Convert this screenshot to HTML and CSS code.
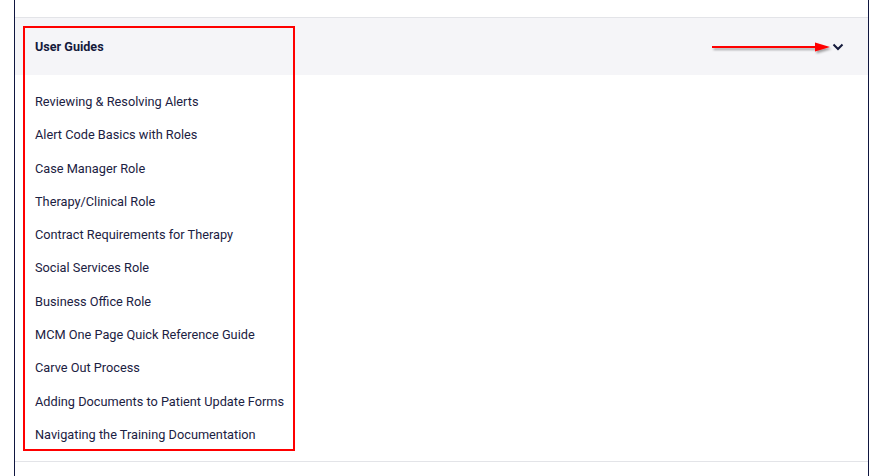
FILE: index.html
```html
<!DOCTYPE html>
<html lang="en">
<head>
    <meta charset="UTF-8">
    <title>User Guides</title>
    <link rel="stylesheet" href="styles.css">
</head>
<body>
    <div class="panel">
        <div class="section">
            <div class="section-header">
                <span class="section-title">User Guides</span>
                <svg class="chevron" width="12" height="8" viewBox="0 0 12 8">
                    <path d="M1.5 1.5 L6 6 L10.5 1.5" fill="none" stroke="#141a3c" stroke-width="2"/>
                </svg>
            </div>
            <ul class="guide-list">
                <li><a href="#">Reviewing &amp; Resolving Alerts</a></li>
                <li><a href="#">Alert Code Basics with Roles</a></li>
                <li><a href="#">Case Manager Role</a></li>
                <li><a href="#">Therapy/Clinical Role</a></li>
                <li><a href="#">Contract Requirements for Therapy</a></li>
                <li><a href="#">Social Services Role</a></li>
                <li><a href="#">Business Office Role</a></li>
                <li><a href="#">MCM One Page Quick Reference Guide</a></li>
                <li><a href="#">Carve Out Process</a></li>
                <li><a href="#">Adding Documents to Patient Update Forms</a></li>
                <li><a href="#">Navigating the Training Documentation</a></li>
            </ul>
        </div>

        <!-- annotation overlays -->
        <div class="highlight-box"></div>
        <svg class="callout-arrow" width="130" height="14" viewBox="0 0 130 14">
            <defs>
                <filter id="shadow" x="-5%" y="-50%" width="110%" height="250%">
                    <feDropShadow dx="1.5" dy="2" stdDeviation="1" flood-color="#000" flood-opacity="0.35"/>
                </filter>
            </defs>
            <g filter="url(#shadow)">
                <line x1="1" y1="6" x2="108" y2="6" stroke="#ff0000" stroke-width="2"/>
                <polygon points="104,1.5 119,6 104,10.5" fill="#ff0000"/>
            </g>
        </svg>
    </div>
</body>
</html>
```

FILE: styles.css
```css
body {
    margin: 0;
    padding: 0;
    background-color: #ffffff;
    font-family: Roboto, "Liberation Sans", Arial, sans-serif;
    color: #1b2142;
}
.panel {
    position: relative;
    margin-left: 14px;
    width: 853px;
    height: 476px;
    border-left: 1px solid #0f1640;
    border-right: 1px solid #0f1640;
    padding-top: 17px;
    box-sizing: content-box;
}
.section {
    border-top: 1px solid #e3e4e8;
    border-bottom: 1px solid #e3e4e8;
}
.section-header {
    display: flex;
    align-items: center;
    justify-content: space-between;
    height: 57px;
    padding: 0 24px 0 20px;
    background-color: #f5f5f8;
}
.section-title {
    font-size: 12.6px;
    font-weight: bold;
    color: #141a3c;
}
.chevron {
    display: block;
    margin-top: 1px;
}
.guide-list {
    list-style: none;
    margin: 0;
    padding: 10px 0 10px 20px;
}
.guide-list li {
    height: 33.3px;
    line-height: 33.3px;
    font-size: 12.75px;
}
.guide-list a {
    color: #1b2142;
    text-decoration: none;
}
.highlight-box {
    position: absolute;
    left: 8px;
    top: 26px;
    width: 268px;
    height: 421px;
    border: 2px solid #ff0000;
}
.callout-arrow {
    position: absolute;
    left: 696px;
    top: 41px;
}
```
